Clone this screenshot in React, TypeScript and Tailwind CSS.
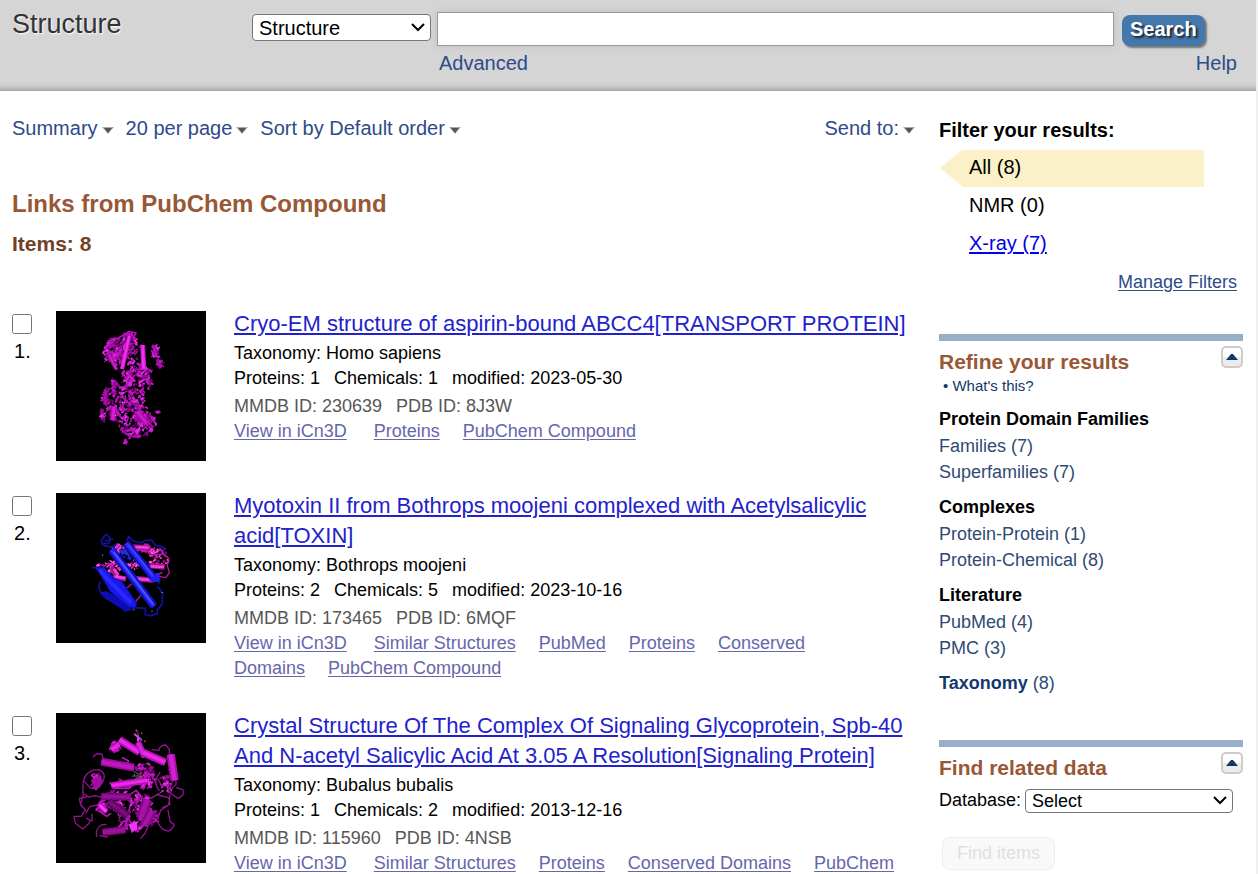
import { ReactNode, SelectHTMLAttributes } from 'react'

interface ResultLink {
  label: string
  wide?: boolean
}

interface Result {
  id: number
  title: string
  taxonomy: string
  proteins: number
  chemicals: number
  modified: string
  mmdb: string
  pdb: string
  links: ResultLink[]
  picture: ReactNode
}

type Blob = [cx: number, cy: number, rx: number, ry: number, count: number]

const MAGENTAS = ['#6a066a', '#8c0a8c', '#a00ca0', '#c414c4', '#d91ad9', '#e630e6', '#b010b0']
const PINKS = ['#8a0a6a', '#c81ab0', '#e832d0', '#ff5af0']

// short strands scattered in an ellipse, same result on every render
function strands(blobs: Blob[], colors: string[], seed: number) {
  let s = seed
  const rnd = () => {
    s = (s * 16807) % 2147483647
    return s / 2147483647
  }
  const out: ReactNode[] = []
  blobs.forEach(([cx, cy, rx, ry, count], b) => {
    for (let i = 0; i < count; i++) {
      const a = rnd() * Math.PI * 2
      const r = Math.sqrt(rnd())
      const x = Math.round(cx + Math.cos(a) * r * rx)
      const y = Math.round(cy + Math.sin(a) * r * ry)
      const dx = Math.round((rnd() - 0.5) * 16)
      const dy = Math.round((rnd() - 0.5) * 16)
      out.push(
        <path
          key={`${b}-${i}`}
          d={`M${x} ${y}q${dy} ${dx} ${dx} ${dy}`}
          stroke={colors[Math.floor(rnd() * colors.length)]}
          strokeWidth={3 + Math.round(rnd() * 4)}
        />
      )
    }
  })
  return out
}

function Helix({ d, width, dark, light }: { d: string; width: number; dark: string; light: string }) {
  return (
    <>
      <path d={d} stroke={dark} strokeWidth={width} strokeLinecap="butt" />
      <path d={d} stroke={light} strokeWidth={Math.round(width / 2)} strokeLinecap="butt" />
    </>
  )
}

function Molecule({ label, children }: { label: string; children: ReactNode }) {
  return (
    <svg role="img" aria-label={label} viewBox="18 18 450 450" className="block size-[150px] bg-black" fill="none" strokeLinecap="round" strokeLinejoin="round">
      {children}
    </svg>
  )
}

function TransportProtein() {
  return (
    <Molecule label="8J3W">
      {strands(
        [
          [206, 132, 42, 34, 120],
          [235, 100, 20, 20, 24],
          [172, 146, 11, 22, 16],
          [196, 168, 24, 22, 24],
          [254, 150, 18, 46, 26],
          [315, 138, 10, 16, 20],
          [328, 177, 12, 10, 14],
          [265, 208, 34, 34, 90],
          [232, 216, 16, 18, 22],
          [298, 222, 8, 34, 22],
          [191, 240, 8, 20, 14],
          [169, 276, 10, 26, 30],
          [160, 336, 8, 16, 20],
          [235, 262, 46, 38, 90],
          [225, 310, 50, 42, 120],
          [270, 320, 24, 44, 60],
          [290, 352, 24, 26, 46],
          [240, 362, 32, 30, 50],
          [256, 386, 40, 8, 24],
          [226, 412, 6, 8, 7],
          [324, 322, 10, 3, 3],
        ],
        MAGENTAS,
        71
      )}
      <path d="M168 128l22-20 24-14 20-12M236 80l22 4-8 14M176 108l30-10M164 150l14-8 20 4 24-12" stroke="#b414b4" strokeWidth="5" />
      <Helix d="M238 92L216 192" width={13} dark="#c414c4" light="#f032f0" />
      <Helix d="M278 120L281 190" width={15} dark="#c414c4" light="#f032f0" />
      <Helix d="M178 152L200 194" width={10} dark="#a80fa8" light="#d91ad9" />
      <Helix d="M192 304L188 346" width={18} dark="#a80fa8" light="#d91ad9" />
      <Helix d="M262 320L290 356" width={18} dark="#a80fa8" light="#c81ac8" />
      <Helix d="M166 256L166 296" width={12} dark="#8a0b8a" light="#b412b4" />
      <Helix d="M312 126L318 150" width={11} dark="#8a0b8a" light="#b812b8" />
      <Helix d="M320 174L334 184" width={11} dark="#8a0b8a" light="#b812b8" />
      <path d="M222 270l8-6 3 18M262 236l4 14M208 282l-6 14M286 250l4 12M214 345l-12-8M240 340l-6 16M268 282l4 14" stroke="#000" strokeWidth="6" />
      <path d="M231 233v1M218 292v1M267 243v1M243 341v1M255 290v1M273 362v1M196 330v1M287 206v1" stroke="#e9b6e9" strokeWidth="3" />
    </Molecule>
  )
}

function Toxin() {
  return (
    <Molecule label="6MQF">
      {strands(
        [
          [180, 242, 40, 18, 40],
          [208, 188, 16, 14, 18],
          [290, 186, 34, 14, 28],
          [325, 214, 28, 26, 34],
          [248, 236, 20, 18, 16],
        ],
        PINKS,
        19
      )}
      <path d="M188 268l40 8M252 274l58 6M298 236l46 4M184 242l18 24M250 180l52 4" stroke="#a0148c" strokeWidth="16" strokeLinecap="butt" />
      <path d="M194 268l32 6M256 275l60 5M302 238l40 2M192 246l12 18M256 180l40 2" stroke="#f43ce8" strokeWidth="8" strokeLinecap="butt" />
      <path d="M258 190h34l10 14 34-2M330 184l14 20 12 10-4 22 6 20-10 16-22-4M306 264l30-6M196 188l10-12 14 6M146 230l16 8 14-10M232 302l12-10M204 330l16 8M258 342l14-16" stroke="#b8189f" strokeWidth="4" />
      <path d="M158 174l-4-14 14-18 12 10-2 16-16 2M166 162l22-6M164 176l22 4M232 160l4-12 14 14 24 6 12-8 20 0 8 14 26 6 4 18M326 290l4-14M324 300l14 18-2 34-14 16 0 12-22 6-14-2v-20l-38-2M150 286q-12 20 16 40M128 242l20 0M264 300l24 16 6 20M222 372l26 -6M186 180l14 -10" stroke="#1212a0" strokeWidth="5" />
      <path d="M152 318l16-4 66 34 6 18-16 4-60-38z" fill="#0c0cb0" stroke="#1010c8" strokeWidth="3" />
      <path d="M184 306l20 18 34 20" stroke="#000" strokeWidth="6" />
      <path d="M140 244l20-4 32 34 22 8 46 66-4 14-20-2-54-46z" fill="#1818e8" stroke="#0e0eb8" strokeWidth="3" />
      <path d="M152 252l30 34 58 58" stroke="#2a2aff" strokeWidth="12" />
      <path d="M206 190l22-4 18 32-22-2z" fill="#222ae0" />
      <Helix d="M228 168L316 278" width={24} dark="#1010b8" light="#2828ff" />
      <path d="M296 280l32 6 2-30z" fill="#2020f0" />
      <Helix d="M184 188L312 358" width={24} dark="#1010c0" light="#2c2cff" />
      <path d="M192 196L308 350" stroke="#5560ff" strokeWidth="4" />
      <path d="M236 174L308 264" stroke="#5560ff" strokeWidth="3" />
      <path d="M222 204l10 6-8 8M232 226l14-4" stroke="#000028" strokeWidth="7" />
      <path d="M204 180v1M266 236v1M336 316v1M252 368v1M306 372v1M158 204v1" stroke="#a8b0f0" strokeWidth="3" />
    </Molecule>
  )
}

function SignalingProtein() {
  return (
    <Molecule label="4NSB">
      {strands(
        [
          [195, 120, 14, 16, 28],
          [284, 188, 24, 20, 34],
          [290, 220, 30, 24, 44],
          [220, 232, 30, 12, 20],
          [200, 280, 48, 30, 60],
          [278, 300, 28, 44, 80],
          [346, 230, 22, 26, 26],
          [158, 300, 18, 18, 24],
          [252, 358, 24, 14, 34],
          [302, 330, 20, 24, 38],
          [140, 224, 14, 24, 30],
          [222, 340, 18, 30, 24],
        ],
        MAGENTAS,
        37
      )}
      <path d="M130 150q8-14 26-8l4 16 20 4M100 222q10-34 44-34 26 8 16 32l-12 20-26 4-18-20M100 222l-2 36 18 12 20-4 20 6M110 270l-22 4 4 20 14 14-12 20-22 0 4 20 22 18 18-16 4-10M108 310l-16-18 8-28M146 294l-26 4-12 20M126 322l0 20-16-8M140 388q-4-24 14-34l14-2M150 386l22 4" stroke="#931093" strokeWidth="4" />
      <path d="M306 128l20 2q4-16 22-16l10 14 0 16M330 196q-24 30-2 54M330 214q26-18 40 4l-8 18-26 2-12-22M356 188l22 14 0 30-20 22 24 20q24-6 16-26l-18-6M360 262l-4 32-24 16-10 30q8 30 34 32 14-6 16-20l-12-8M354 310l6 32M300 344l-14 34-14 16M324 264l32 8 4 20-22 10M318 320l-24 36M284 262l20 12 22-14" stroke="#931093" strokeWidth="4" />
      <path d="M214 320l18 18-8 20M240 300l-8 30 14 22M236 266l22-16 14 16-12 22M218 152l18 10-8 12 22 14M148 312l22 16 12-8M180 228l14 16 44 0M166 276l-22 18" stroke="#b016b0" strokeWidth="5" />
      <Helix d="M154 268L242 270" width={22} dark="#750975" light="#980e98" />
      <Helix d="M176 284L234 326" width={24} dark="#5c075c" light="#7a0b7a" />
      <Helix d="M158 376L226 368" width={22} dark="#820b82" light="#a010a0" />
      <Helix d="M154 164L252 182" width={24} dark="#9c0f9c" light="#c018c0" />
      <Helix d="M184 236L292 220" width={20} dark="#b412b4" light="#ec28ec" />
      <Helix d="M208 98L268 136" width={23} dark="#b412b4" light="#ec28ec" />
      <Helix d="M264 106L284 150" width={19} dark="#b412b4" light="#e020e0" />
      <Helix d="M278 136L346 166" width={24} dark="#b412b4" light="#ec28ec" />
      <Helix d="M362 142L374 220" width={25} dark="#a812a8" light="#d81cd8" />
      <Helix d="M292 278L272 334" width={30} dark="#820b82" light="#a812a8" />
      <Helix d="M306 312L282 356" width={26} dark="#820b82" light="#a812a8" />
      <Helix d="M148 294L170 314" width={16} dark="#c414c4" light="#ff3cff" />
      <Helix d="M184 128L208 112" width={22} dark="#b812b8" light="#e82ae8" />
      <path d="M236 352l24-8 2 24-18 6z" fill="#f434f4" />
      <path d="M124 220l26-18 10 24-20 20z" fill="#a010a0" />
      <path d="M248 190l20 14-12 14M248 208l26-4M262 72l4 22" stroke="#3a3a3a" strokeWidth="5" />
      <path d="M254 82l20 16M264 88v14" stroke="#e03ce0" strokeWidth="6" />
      <path d="M259 70v1M275 78v1M285 102v1M258 217v1M280 206v1" stroke="#d2501e" strokeWidth="5" />
      <path d="M271 98v2M253 203v1" stroke="#3c50d2" strokeWidth="5" />
    </Molecule>
  )
}

const RESULTS: Result[] = [
  {
    id: 1,
    title: 'Cryo-EM structure of aspirin-bound ABCC4[TRANSPORT PROTEIN]',
    taxonomy: 'Homo sapiens',
    proteins: 1,
    chemicals: 1,
    modified: '2023-05-30',
    mmdb: '230639',
    pdb: '8J3W',
    links: [{ label: 'View in iCn3D', wide: true }, { label: 'Proteins' }, { label: 'PubChem Compound' }],
    picture: <TransportProtein />,
  },
  {
    id: 2,
    title: 'Myotoxin II from Bothrops moojeni complexed with Acetylsalicylic acid[TOXIN]',
    taxonomy: 'Bothrops moojeni',
    proteins: 2,
    chemicals: 5,
    modified: '2023-10-16',
    mmdb: '173465',
    pdb: '6MQF',
    links: [
      { label: 'View in iCn3D', wide: true },
      { label: 'Similar Structures' },
      { label: 'PubMed' },
      { label: 'Proteins' },
      { label: 'Conserved Domains' },
      { label: 'PubChem Compound' },
    ],
    picture: <Toxin />,
  },
  {
    id: 3,
    title: 'Crystal Structure Of The Complex Of Signaling Glycoprotein, Spb-40 And N-acetyl Salicylic Acid At 3.05 A Resolution[Signaling Protein]',
    taxonomy: 'Bubalus bubalis',
    proteins: 1,
    chemicals: 2,
    modified: '2013-12-16',
    mmdb: '115960',
    pdb: '4NSB',
    links: [
      { label: 'View in iCn3D', wide: true },
      { label: 'Similar Structures' },
      { label: 'Proteins' },
      { label: 'Conserved Domains' },
      { label: 'PubChem Compound' },
    ],
    picture: <SignalingProtein />,
  },
]

const REFINE = [
  { heading: 'Protein Domain Families', items: [['Families', 7], ['Superfamilies', 7]] },
  { heading: 'Complexes', items: [['Protein-Protein', 1], ['Protein-Chemical', 8]] },
  { heading: 'Literature', items: [['PubMed', 4], ['PMC', 3]] },
]

function MenuButton({ children }: { children: ReactNode }) {
  return (
    <button type="button" className="flex items-center gap-1 text-[#2f4a8b]">
      {children}
      <svg width="12" height="7" viewBox="0 0 12 7" className="mt-1">
        <path d="M0 0h12L6 7z" fill="#aaa" />
        <path d="M2 1h8L6 6z" fill="#555" />
      </svg>
    </button>
  )
}

function Select({ wrapper, className, children, ...props }: SelectHTMLAttributes<HTMLSelectElement> & { wrapper: string }) {
  return (
    <div className={`relative ${wrapper}`}>
      <select {...props} className={`block w-full appearance-none rounded border border-[#767676] bg-white pr-7 pl-1.5 ${className}`}>
        {children}
      </select>
      <svg width="14" height="9" viewBox="0 0 14 9" fill="none" stroke="#000" strokeWidth="2" className="pointer-events-none absolute inset-y-0 right-1.5 my-auto">
        <path d="M1 1l6 6 6-6" />
      </svg>
    </div>
  )
}

function CollapseButton({ label }: { label: string }) {
  return (
    <button
      type="button"
      aria-label={label}
      className="flex size-[22px] items-center justify-center rounded-[5px] border-2 border-[#ccc] bg-linear-to-b from-white from-50% to-[#ececec] to-50%"
    >
      <svg width="12" height="7" viewBox="0 0 12 7" className="mb-0.5">
        <path d="M0 7L5 1h2l5 6z" fill="#14386e" />
      </svg>
    </button>
  )
}

function ResultRow({ result }: { result: Result }) {
  return (
    <li className="flex items-start">
      <div className="flex w-11 shrink-0 flex-col pt-[5px]">
        <input type="checkbox" id={`result-${result.id}`} className="size-5" />
        <label htmlFor={`result-${result.id}`} className="pl-0.5 text-[20px] leading-[34px]">
          {result.id}.
        </label>
      </div>
      <div className="mt-0.5 mr-7 shrink-0">{result.picture}</div>
      <div className="min-w-0 flex-1 text-[18px] leading-[25px]">
        <h3 className="mb-0.5 text-[22px] leading-[30px]">
          <a href="#" className="text-[#2222cc] underline decoration-2 underline-offset-2">{result.title}</a>
        </h3>
        <p>Taxonomy: {result.taxonomy}</p>
        <p className="flex flex-wrap gap-x-3.5">
          <span>Proteins: {result.proteins}</span>
          <span>Chemicals: {result.chemicals}</span>
          <span>modified: {result.modified}</span>
        </p>
        <p className="mt-[3px] flex flex-wrap gap-x-3.5 text-[#575757]">
          <span>MMDB ID: {result.mmdb}</span>
          <span>PDB ID: {result.pdb}</span>
        </p>
        <p className="pr-[19px]">
          {result.links.map(link => (
            <span key={link.label}>
              <a href="#" className={`text-[#6666aa] underline underline-offset-2 ${link.wide ? 'mr-[22px]' : 'mr-[18px]'}`}>
                {link.label}
              </a>{' '}
            </span>
          ))}
        </p>
      </div>
    </li>
  )
}

function Header() {
  return (
    <header className="flex h-[91px] items-start bg-[#d5d5d5] pr-[19px] pl-3 shadow-[inset_0_-9px_6px_-7px_#999]">
      <h1 className="w-60 shrink-0 pt-2 text-[27px] leading-8 text-[#333] [text-shadow:1px_1px_2px_#fff]">Structure</h1>
      <form className="flex min-w-0 flex-1 items-start" onSubmit={e => e.preventDefault()}>
        <Select aria-label="Database" wrapper="mt-3.5 w-[179px] shrink-0" className="h-[27px] text-[20px] leading-6">
          <option>Structure</option>
        </Select>
        <div className="ml-1.5 min-w-0 flex-1 pt-3">
          <input aria-label="Search term" type="text" className="block h-[34px] w-full border border-[#999] bg-white px-2 text-[20px] shadow-[0_0_8px_#c0c0c0]" />
          <a href="#" className="mt-1 ml-0.5 inline-block text-[20px] leading-[26px] text-[#2f4a8b]">Advanced</a>
        </div>
        <div className="ml-2 flex w-[115px] shrink-0 flex-col items-start pt-[15px]">
          <button
            type="submit"
            className="h-[31px] rounded-lg bg-[#4477aa] px-2 pb-1 text-[20px] leading-6 font-bold text-white shadow-[2px_2px_2px_#777] [text-shadow:2px_2px_2px_#223]"
          >
            Search
          </button>
          <a href="#" className="mt-1 self-end text-[20px] leading-[26px] text-[#2f4a8b]">Help</a>
        </div>
      </form>
    </header>
  )
}

function Sidebar() {
  return (
    <aside className="w-[304px] shrink-0">
      <h2 className="pt-[26px] text-[20px] leading-[26px] font-bold">Filter your results:</h2>
      <ul className="mt-[7px] text-[20px] leading-[34px]">
        <li className="flex">
          <svg width="22" height="37" viewBox="0 0 22 37" className="ml-px block">
            <path d="M22 0L0 18 22 36z" fill="#faf1c8" />
          </svg>
          <span className="mr-[39px] h-[37px] flex-1 bg-[#faf1c8] pl-[7px]">All (8)</span>
        </li>
        <li className="h-[38px] pl-[30px] leading-9">NMR (0)</li>
        <li className="h-[38px] pl-[30px] leading-9">
          <a href="#" className="text-[#0000ee] underline underline-offset-2">X-ray (7)</a>
        </li>
      </ul>
      <p className="mt-[7px] pr-1.5 text-right text-[18px] leading-6">
        <a href="#" className="text-[#2f4a8b] underline underline-offset-2">Manage Filters</a>
      </p>

      <section className="mt-10 border-t-[7px] border-[#97b0c8] text-[18px]">
        <div className="flex items-start justify-between pt-[5px]">
          <h2 className="pt-[3px] text-[21px] leading-[26px] font-bold text-[#985735]">Refine your results</h2>
          <CollapseButton label="Collapse refine results" />
        </div>
        <p className="pl-1 text-[15px] leading-[22px] text-[#14386e]">
          • <a href="#">What's this?</a>
        </p>
        {REFINE.map(group => (
          <div key={group.heading} className="mt-[9px]">
            <h3 className="leading-[27px] font-bold">{group.heading}</h3>
            <ul className="leading-[26px] text-[#2f4a73]">
              {group.items.map(([name, count]) => (
                <li key={name}>
                  <a href="#">{name}</a> ({count})
                </li>
              ))}
            </ul>
          </div>
        ))}
        <p className="mt-[9px] leading-[26px] text-[#2f4a73]">
          <a href="#" className="font-bold text-[#14386e]">Taxonomy</a> (8)
        </p>
      </section>

      <section className="mt-11 border-t-[7px] border-[#97b0c8] text-[18px]">
        <div className="flex items-start justify-between pt-[5px]">
          <h2 className="pt-[3px] text-[21px] leading-[26px] font-bold text-[#985735]">Find related data</h2>
          <CollapseButton label="Collapse related data" />
        </div>
        <div className="mt-1.5 flex items-center">
          <label htmlFor="related-db">Database:</label>
          <Select id="related-db" wrapper="mr-2.5 ml-1 min-w-0 flex-1" className="h-6 leading-5">
            <option>Select</option>
          </Select>
        </div>
        <button type="button" disabled className="mt-[23px] ml-[3px] h-[33px] rounded-lg border border-[#eee] bg-[#f9f9f9] px-3.5 text-[#e0e0e0]">
          Find items
        </button>
      </section>
    </aside>
  )
}

export default function App() {
  return (
    <div className="h-screen overflow-hidden border-r-2 border-[#f0f0f0] bg-white font-['Liberation_Sans',Arial,sans-serif] text-black">
      <Header />
      <div className="flex pr-[13px] pl-3">
        <main className="mr-6 min-w-0 flex-1">
          <div className="flex gap-x-3 pt-[23px] text-[20px] leading-7">
            <MenuButton>Summary</MenuButton>
            <MenuButton>20 per page</MenuButton>
            <MenuButton>Sort by Default order</MenuButton>
            <div className="ml-auto">
              <MenuButton>Send to:</MenuButton>
            </div>
          </div>
          <h2 className="mt-[46px] text-[24px] leading-8 font-bold text-[#985735]">Links from PubChem Compound</h2>
          <h3 className="mt-2.5 text-[21px] leading-7 font-bold text-[#724128]">Items: 8</h3>
          <ol className="mt-[51px] flex flex-col gap-[30px]">
            {RESULTS.map(result => (
              <ResultRow key={result.id} result={result} />
            ))}
          </ol>
        </main>
        <Sidebar />
      </div>
    </div>
  )
}
